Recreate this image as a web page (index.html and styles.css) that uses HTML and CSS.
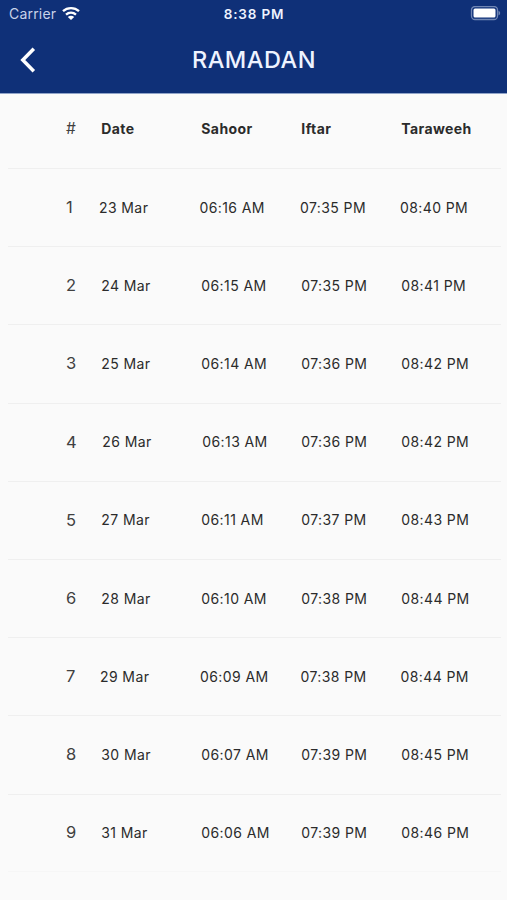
FILE: index.html
```html
<!DOCTYPE html>
<html lang="en">

<head>
    <meta charset="UTF-8">
    <title>Ramadan</title>
    <link rel="stylesheet" href="styles.css">
</head>

<body>
    <header class="header">
        <div class="status">
            <div class="carrier">
                <span>Carrier</span>
                <svg class="wifi" viewBox="0 0 18 14" width="18" height="14">
                    <path d="M1 5.2C5.4 1 12.6 1 17 5.2M4 8.7c2.9-2.6 7.1-2.6 10 0" />
                    <path class="dot" d="M9 14L5.8 11c1.8-1.6 4.6-1.6 6.4 0z" />
                </svg>
            </div>
            <div class="time">8:38 PM</div>
            <div class="power">
                <svg width="31" height="15" viewBox="0 0 31 15">
                    <rect class="shell" x="1.5" y="0.5" width="26" height="13" rx="3.5" />
                    <rect class="level" x="3.5" y="2.5" width="22" height="9" rx="1.5" />
                    <path class="tip" d="M28.5 4.7c2.2.8 2.2 3.8 0 4.6z" />
                </svg>
            </div>
        </div>
        <div class="nav">
            <svg class="back" width="16" height="26" viewBox="0 0 16 26">
                <path d="M13.8 1.8L2.8 13l11 11.2" />
            </svg>
            <h1>RAMADAN</h1>
        </div>
    </header>
    <ul class="list">
        <li class="row head"><span class="num">#</span><span>Date</span><span>Sahoor</span><span>Iftar</span><span>Taraweeh</span></li>
        <li class="row r1"><span class="num">1</span><span>23 Mar</span><span>06:16 AM</span><span>07:35 PM</span><span>08:40 PM</span></li>
        <li class="row"><span class="num">2</span><span>24 Mar</span><span>06:15 AM</span><span>07:35 PM</span><span>08:41 PM</span></li>
        <li class="row"><span class="num">3</span><span>25 Mar</span><span>06:14 AM</span><span>07:36 PM</span><span>08:42 PM</span></li>
        <li class="row r4"><span class="num">4</span><span>26 Mar</span><span>06:13 AM</span><span>07:36 PM</span><span>08:42 PM</span></li>
        <li class="row"><span class="num">5</span><span>27 Mar</span><span>06:11 AM</span><span>07:37 PM</span><span>08:43 PM</span></li>
        <li class="row"><span class="num">6</span><span>28 Mar</span><span>06:10 AM</span><span>07:38 PM</span><span>08:44 PM</span></li>
        <li class="row r7"><span class="num">7</span><span>29 Mar</span><span>06:09 AM</span><span>07:38 PM</span><span>08:44 PM</span></li>
        <li class="row"><span class="num">8</span><span>30 Mar</span><span>06:07 AM</span><span>07:39 PM</span><span>08:45 PM</span></li>
        <li class="row"><span class="num">9</span><span>31 Mar</span><span>06:06 AM</span><span>07:39 PM</span><span>08:46 PM</span></li>
    </ul>
</body>

</html>
```
FILE: styles.css
```css
body {
    margin: 0;
    height: 900px;
    overflow: hidden;
    background: #fafafa;
    color: #2b2b2b;
    font-family: Inter, "Liberation Sans", sans-serif;
}

.header {
    height: 93px;
    background: #0f3078;
    border-bottom: 1px solid #91a4c9;
    color: #fff;
}

.status {
    display: grid;
    grid-template-columns: 1fr auto 1fr;
    align-items: center;
    height: 27px;
    padding: 0 6px 0 9px;
    font-size: 14px;
}
.carrier {
    display: flex;
    align-items: center;
    gap: 6px;
    color: #c8d3e9;
    letter-spacing: 0.2px;
}
.wifi {
    fill: none;
    stroke: #fff;
    stroke-width: 2.3;
    margin-top: -2px;
}
.wifi .dot {
    fill: #fff;
    stroke: none;
}
.time {
    margin-right: 2px;
    color: #eef3ff;
    font-size: 13.5px;
    font-weight: 600;
    letter-spacing: 0.8px;
}
.power {
    display: flex;
    justify-content: flex-end;
}
.shell {
    fill: none;
    stroke: #7086b4;
    stroke-width: 1.3;
}
.level {
    fill: #fff;
}
.tip {
    fill: #7086b4;
}

.nav {
    display: grid;
    grid-template-columns: 60px 1fr 60px;
    align-items: center;
    height: 66px;
}
.back {
    margin-left: 20px;
    fill: none;
    stroke: #fff;
    stroke-width: 3.5;
}
.nav h1 {
    margin: 0;
    padding: 0 0 2px 1px;
    color: #eef3ff;
    text-align: center;
    font-size: 23.5px;
    font-weight: 500;
    letter-spacing: 0.5px;
}

.list {
    margin: 0;
    padding: 0 6px 0 8px;
    list-style: none;
}
.row {
    display: grid;
    grid-template-columns: 35.3px 100px 100px 100px 1fr;
    align-items: center;
    box-sizing: border-box;
    height: 78.2px;
    padding-left: 58px;
    padding-bottom: 1px;
    border-bottom: 1px solid #efefef;
    font-size: 14px;
    letter-spacing: 0.4px;
    white-space: nowrap;
}
.row .num {
    color: #404040;
    font-size: 16.5px;
}
.row:last-child {
    height: 77px;
    border-color: #f6f6f6;
}
/* these rows sit slightly off the column edge */
.r1 {
    grid-template-columns: 33px 100.5px 100.5px 100px 1fr;
}
.r4 {
    grid-template-columns: 36.3px 100px 99px 100px 1fr;
}
.r7 {
    grid-template-columns: 34px 100px 100.5px 100px 1fr;
}
.head {
    height: 75px;
    padding-bottom: 5px;
    font-weight: 700;
    letter-spacing: 0.4px;
}
.head .num {
    font-size: 15.5px;
    font-weight: 400;
}
```
